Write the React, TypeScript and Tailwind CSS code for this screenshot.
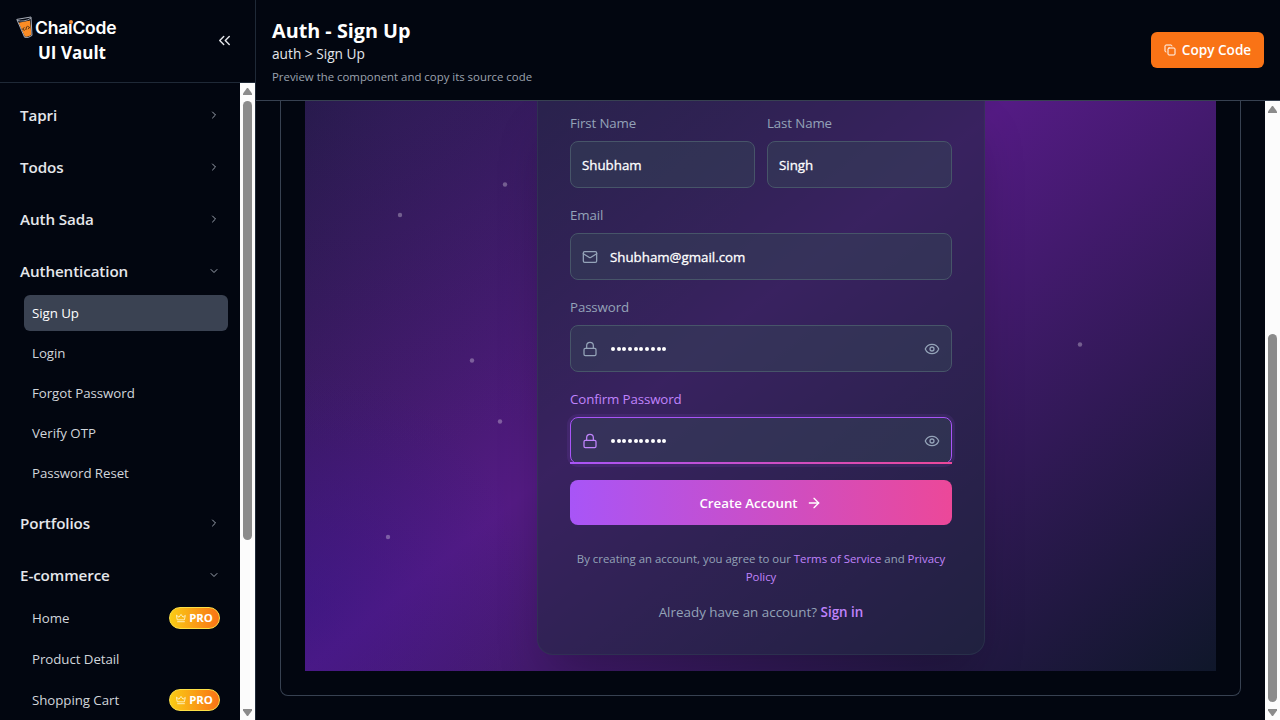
import React from "react";
import { ChevronRight, ChevronDown, ChevronsLeft, Copy, Mail, Lock, Eye, ArrowRight } from "lucide-react";

function CupLogo() {
  return (
    <svg width="18" height="23" viewBox="0 0 18 23" fill="none" className="shrink-0">
      <path d="M2.6 6.8 14 4.6 15.4 18.8Q12 21.6 8.8 20.6Z" fill="#fb8c25" />
      <path d="M.8 3.4 15 1 16 19.4Q12.5 22.4 8.6 21.3Z" stroke="#a8adb8" strokeWidth="1" />
      <path d="M1 4.4Q8 6.4 15 2.2" stroke="#a8adb8" strokeWidth=".9" />
      <path d="m8.3 11.3-1.8 2 2.2 1M11.3 10.2l2.3 1.2-1.5 1.8M10.6 10.6l-.8 3.4" stroke="#3b2412" strokeWidth=".9" />
    </svg>
  );
}

function Crown() {
  return (
    <svg width="10" height="10" viewBox="0 0 10 10" fill="none" stroke="#fef3c7" strokeWidth=".9" strokeLinejoin="round" strokeLinecap="round">
      <path d="M.7 2.4 3 4.2 5 1.4l2 2.8 2.3-1.8-.9 4.4H1.6ZM1.6 8.7h6.8" />
    </svg>
  );
}

function Scrollbar({ thumb }: { thumb: React.ReactNode }) {
  return (
    <div className="flex w-[15px] shrink-0 flex-col items-center bg-[#fcfcfc]">
      <svg width="9" height="18" viewBox="0 0 9 18" className="shrink-0" fill="#8b8b8b"><path d="M4 5h1l4 5.5V12H0v-1.500Z" /></svg>
      {thumb}
      <div className="flex-1" />
      <svg width="9" height="15" viewBox="0 0 9 15" className="shrink-0" fill="#8b8b8b"><path d="M0 4h9v1.500L5 11H4L0 5.500Z" /></svg>
    </div>
  );
}

function Group({ name, open }: { name: string; open?: boolean }) {
  return (
    <div className="flex h-[52px] items-center justify-between pl-5 pr-5">
      <span className="text-[15.2px] font-semibold tracking-[-0.1px] text-[#e5e7eb]">{name}</span>
      {open ? <ChevronDown size={12} className="text-[#9ca3af]" /> : <ChevronRight size={12} className="text-[#9ca3af]" />}
    </div>
  );
}

function Item({ name, active, pro, tall }: { name: string; active?: boolean; pro?: boolean; tall?: boolean }) {
  return (
    <div className={"ml-6 mr-3 mb-1 flex shrink-0 items-center justify-between rounded-md pl-2 pr-2 " + (tall ? "h-[38px] " : "h-9 ") + (active ? "bg-[#3a4252] text-white" : "text-[#d1d5db]")}>
      <span className="pt-0.5 text-[13.3px] tracking-[-0.06px]">{name}</span>
      {pro && (
        <span className="flex h-[22px] w-[51px] items-center justify-center gap-[3px] rounded-full border border-[#fde047] bg-[linear-gradient(to_right,#facc15,#f97316)]">
          <Crown />
          <span className="text-[11.4px] font-bold text-white">PRO</span>
        </span>
      )}
    </div>
  );
}

function Field({ label, value, icon, eye, focus }: { label: string; value: string; icon?: React.ReactNode; eye?: boolean; focus?: boolean }) {
  return (
    <div className="flex flex-1 flex-col">
      <div className={"flex h-5 items-center pt-0.5 text-[13.3px] tracking-[-0.12px] " + (focus ? "text-[#c084fc]" : "text-[#94a3b8]")}>{label}</div>
      <div className={"relative mt-2 flex h-[47px] items-center rounded-lg border bg-[#334155]/50 px-[11px] " + (focus ? "border-[#a855f7] shadow-[0_0_0_3px_rgba(168,85,247,0.1)]" : "border-[#475569]")}>
        {icon && <span className={"mr-3 " + (focus ? "text-[#c084fc]" : "text-[#94a3b8]")}>{icon}</span>}
        {eye ? (
          <span className="flex gap-[1.700px] pl-px">
            {Array.from({ length: 10 }, (_, i) => <i key={i} className="size-1 rounded-full bg-white" />)}
          </span>
        ) : (
          <span className="pt-0.5 text-[13.3px] text-white [-webkit-text-stroke:0.3px_white]">{value}</span>
        )}
        {eye && <Eye size={16} strokeWidth={1.9} className="ml-auto text-[#94a3b8]" />}
        {focus && <div className="absolute -inset-x-px -bottom-px h-0.5 bg-[linear-gradient(to_right,#a855f7,#ec4899)]" />}
      </div>
    </div>
  );
}

function Backdrop() {
  return (
    <>
      <div className="absolute inset-x-0 bottom-0 h-[738px] bg-[linear-gradient(to_bottom_right,#0f172a,#541b84,#0f172a)]" />
      <div className="absolute inset-0 bg-[radial-gradient(circle_at_0px_500px,rgba(46,20,140,0.42),transparent_230px),radial-gradient(circle_at_90px_-30px,rgba(88,40,150,0.22),transparent_380px)]" />
      <svg className="absolute inset-0" width="911" height="570" viewBox="305 101 911 570" fill="#ffffff" fillOpacity=".3">
        <circle cx="505" cy="184.500" r="2.2" /><circle cx="400" cy="215" r="2.2" /><circle cx="472" cy="360.500" r="2.2" />
        <circle cx="500" cy="421.500" r="2.2" /><circle cx="388" cy="537" r="2.2" /><circle cx="1080" cy="344.500" r="2.2" />
      </svg>
    </>
  );
}

export default function App() {
  return (
    <div className="flex h-[720px] w-[1280px] overflow-hidden bg-[#020610] font-['Open_Sans','Noto_Sans',sans-serif] text-white">
      <aside className="flex w-64 shrink-0 flex-col border-r border-[#1f2937]">
        <div className="flex h-[83px] shrink-0 items-center justify-between border-b border-[#1f2937] pl-4 pr-[21px]">
          <div className="flex w-[102px] flex-col pb-px">
            <div className="flex h-6 items-center gap-px">
              <CupLogo />
              <span className="font-['Inter',sans-serif] text-[17.500px] font-semibold leading-6 tracking-[-0.22px]">
                Cha<span className="relative inline-block">ı<i className="absolute left-[0.500px] top-[4px] size-[4px] rounded-full bg-[#fb923c]" /></span>Code
              </span>
            </div>
            <div className="pl-[22px] text-[17px] font-bold leading-[26px] whitespace-nowrap">UI Vault</div>
          </div>
          <ChevronsLeft size={19} strokeWidth={1.8} className="-mt-px text-[#e5e7eb]" />
        </div>
        <div className="flex min-h-0 flex-1">
          <nav className="flex w-60 shrink-0 flex-col overflow-hidden pt-[6px]">
            <div className="h-[52px] shrink-0"><Group name="Tapri" /></div>
            <div className="h-[52px] shrink-0"><Group name="Todos" /></div>
            <div className="h-[52px] shrink-0"><Group name="Auth Sada" /></div>
            <div className="h-[50px] shrink-0"><Group name="Authentication" open /></div>
            <Item name="Sign Up" active />
            <Item name="Login" />
            <Item name="Forgot Password" />
            <Item name="Verify OTP" />
            <Item name="Password Reset" />
            <div className="mt-[2px] h-[52px] shrink-0"><Group name="Portfolios" /></div>
            <div className="h-[50px] shrink-0"><Group name="E-commerce" open /></div>
            <Item name="Home" pro tall />
            <Item name="Product Detail" />
            <Item name="Shopping Cart" pro tall />
          </nav>
          <Scrollbar thumb={<div className="h-[439px] w-[9px] shrink-0 rounded-full bg-[#8b8b8b]" />} />
        </div>
      </aside>
      <div className="flex min-w-0 flex-1 flex-col">
        <header className="flex h-[101px] shrink-0 items-center justify-between border-b border-[#374151] px-4">
          <div className="pt-1">
            <h1 className="text-[19.800px] font-bold leading-7">Auth - Sign Up</h1>
            <div className="text-[13.700px] leading-[18px] text-[#e5e7eb]">auth &gt; Sign Up</div>
            <div className="mt-1 text-[11.400px] leading-5 text-[#9ca3af]">Preview the component and copy its source code</div>
          </div>
          <button className="flex h-9 w-[113px] items-center justify-center gap-[6px] rounded-md bg-[#f97316] text-[13.600px] font-semibold">
            <Copy size={12} /> <span className="pt-px">Copy Code</span>
          </button>
        </header>
        <div className="flex min-h-0 flex-1">
          <main className="w-[1009px] shrink-0 pl-6">
            <div className="h-[595px] w-[961px] rounded-b-lg border border-t-0 border-[#374151] px-6">
              <div className="relative flex h-[570px] w-[911px] justify-center overflow-hidden">
                <Backdrop />
                <section className="relative ml-px h-[554px] w-[448px] rounded-b-2xl border border-t-0 border-[#334155]/50 bg-[#1e293b]/50 px-8 pt-3 shadow-2xl">
                  <div className="flex gap-3">
                    <Field label="First Name" value="Shubham" />
                    <Field label="Last Name" value="Singh" />
                  </div>
                  <div className="mt-[17px] flex"><Field label="Email" value="Shubham@gmail.com" icon={<Mail size={16} strokeWidth={1.9} />} /></div>
                  <div className="mt-[17px] flex"><Field label="Password" value="" eye icon={<Lock size={16} strokeWidth={1.9} />} /></div>
                  <div className="mt-[17px] flex"><Field label="Confirm Password" value="" eye focus icon={<Lock size={16} strokeWidth={1.9} />} /></div>
                  <button className="mt-4 flex h-[45px] w-full items-center justify-center gap-2 rounded-lg bg-[linear-gradient(to_right,#a855f7,#ec4899)] pr-px text-[13.300px] font-semibold">
                    <span className="pt-0.5">Create Account</span> <ArrowRight size={16} />
                  </button>
                  <p className="mt-[25px] text-center text-[11.400px] leading-[18px] text-[#94a3b8]">
                    By creating an account, you agree to our <span className="text-[#c084fc]">Terms of Service</span> and <span className="text-[#c084fc]">Privacy<br />Policy</span>
                  </p>
                  <p className="mt-4 text-center text-[13.400px] leading-5 text-[#94a3b8]">
                    Already have an account? <span className="font-semibold text-[#c084fc]">Sign in</span>
                  </p>
                </section>
              </div>
            </div>
          </main>
          <Scrollbar thumb={<><div className="h-[215px] shrink-0" /><div className="h-[368px] w-[9px] shrink-0 rounded-full bg-[#8b8b8b]" /></>} />
        </div>
      </div>
    </div>
  );
}
